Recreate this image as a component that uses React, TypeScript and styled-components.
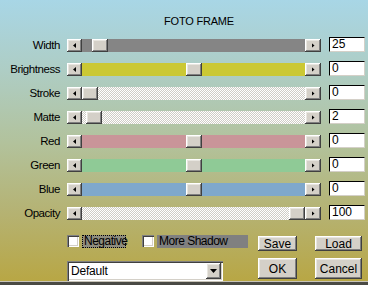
import React from "react";
import styled, { createGlobalStyle, css } from "styled-components";

const GlobalStyle = createGlobalStyle`
  html, body {
    margin: 0;
    padding: 0;
  }
  body {
    font-family: "Liberation Sans", Arial, sans-serif;
  }
`;

const raised = css`
  background: #d4d0c8;
  box-shadow: inset -1px -1px #404040, inset 1px 1px #ffffff,
    inset -2px -2px #808080, inset 2px 2px #e8e6e0;
`;

const sunken = css`
  box-shadow: inset 1px 1px #808080, inset 2px 2px #404040,
    inset -1px -1px #ffffff, inset -2px -2px #d4d0c8;
`;

const Panel = styled.div`
  width: 368px;
  height: 285px;
  box-sizing: border-box;
  padding-top: 14px;
  display: flex;
  flex-direction: column;
  font-size: 11.5px;
  letter-spacing: -0.45px;
  color: #000;
  background: linear-gradient(
    180deg,
    #a8d6e6 0%,
    #aecdc4 25%,
    #b2c29c 50%,
    #b5b272 75%,
    #b8a642 100%
  );
`;

const Title = styled.div`
  height: 14px;
  line-height: 14px;
  margin-bottom: 9px;
  padding-left: 30px;
  text-align: center;
  font-size: 11px;
  letter-spacing: -0.2px;
`;

const Rows = styled.div`
  display: flex;
  flex-direction: column;
`;

const Row = styled.div`
  display: grid;
  grid-template-columns: 67px 254px 36px;
  align-items: start;
  height: 24px;
`;

const Label = styled.div`
  margin-top: 2px;
  height: 13px;
  line-height: 13px;
  padding-right: 7px;
  text-align: right;
  white-space: nowrap;
`;

const Slider = styled.div`
  margin-top: 2px;
  height: 13px;
  display: flex;
`;

const ArrowButton = styled.div<{ $wide?: boolean }>`
  ${raised};
  width: ${(p) => (p.$wide ? 16 : 15)}px;
  height: 13px;
  flex: none;
  display: flex;
  align-items: center;
  justify-content: center;
`;

const Arrow = styled.span<{ $dir: "left" | "right" | "down" }>`
  display: block;
  background: #000;
  ${(p) =>
    p.$dir === "left"
      ? css`
          width: 3px;
          height: 5px;
          clip-path: polygon(100% 0, 0 50%, 100% 100%);
        `
      : p.$dir === "right"
      ? css`
          width: 3px;
          height: 5px;
          clip-path: polygon(0 0, 100% 50%, 0 100%);
        `
      : css`
          width: 7px;
          height: 4px;
          clip-path: polygon(0 0, 100% 0, 50% 100%);
        `}
`;

const fills: Record<string, string> = {
  gray: "#858585",
  yellow: "#cbc834",
  red: "#c99599",
  green: "#8fca96",
  blue: "#7fa8cc",
};

const Track = styled.div<{ $fill: string }>`
  flex: 1;
  position: relative;
  ${(p) =>
    p.$fill === "hatch"
      ? css`
          background: repeating-conic-gradient(#ffffff 0 25%, #cfcdc6 0 50%) 0 0 /
            2px 2px;
        `
      : css`
          background: ${fills[p.$fill]};
        `}
`;

const Thumb = styled.div`
  ${raised};
  position: absolute;
  top: 0;
  width: 16px;
  height: 13px;
`;

const ValueBox = styled.div`
  margin-left: 8px;
  width: 36px;
  height: 15px;
  box-sizing: border-box;
  background: #fff;
  border-top: 1px solid #000;
  border-left: 1px solid #000;
  border-right: 1px solid #d4d0c8;
  border-bottom: 1px solid #d4d0c8;
  padding-left: 2px;
  line-height: 13px;
  font-size: 12px;
  letter-spacing: 0;
`;

const Bottom = styled.div`
  display: grid;
  grid-template-columns: 258px 39px 65px;
  grid-template-rows: 15px 21px;
  row-gap: 7px;
  margin-top: 7px;
`;

const OptionsCell = styled.div`
  padding-left: 67px;
  display: flex;
  align-items: flex-start;
`;

const CheckGroup = styled.div<{ $gap?: number }>`
  display: flex;
  align-items: flex-start;
  margin-right: ${(p) => p.$gap ?? 0}px;
`;

const CheckBox = styled.div`
  width: 12px;
  height: 12px;
  margin-top: -1px;
  background: #fff;
  ${sunken};
  flex: none;
`;

const CheckLabel = styled.div<{ $focused?: boolean; $width: number }>`
  width: ${(p) => p.$width}px;
  height: 13px;
  line-height: 12px;
  margin-top: -1px;
  margin-left: 3px;
  padding: 0 2px;
  box-sizing: border-box;
  font-size: 12px;
  letter-spacing: -0.5px;
  background: ${(p) => (p.$focused ? "#8e8c7e" : "#808080")};
  ${(p) => p.$focused && `outline: 1px dotted #000; outline-offset: -1px;`}
  white-space: nowrap;
`;

const PushButton = styled.div<{ $col: number }>`
  ${raised};
  grid-column: ${(p) => p.$col};
  display: flex;
  align-items: center;
  justify-content: center;
  font-size: 12px;
  letter-spacing: 0;
  ${(p) => p.$col === 3 && `margin-left: 18px;`}
`;

const SelectCell = styled.div`
  padding-left: 67px;
  padding-top: 3px;
`;

const SelectBox = styled.div`
  width: 156px;
  height: 20px;
  box-sizing: border-box;
  background: #fff;
  ${sunken};
  display: flex;
  align-items: center;
  padding: 2px 2px 2px 4px;
`;

const SelectText = styled.div`
  flex: 1;
  font-size: 12px;
  letter-spacing: -0.2px;
`;

const DropButton = styled.div`
  ${raised};
  width: 15px;
  height: 16px;
  display: flex;
  align-items: center;
  justify-content: center;
`;

const Edge = styled.div`
  margin-top: auto;
  height: 3px;
  border-top: 1px solid #c8c4b8;
  background: #4a4a44;
`;

type SliderRow = {
  label: string;
  value: number;
  min: number;
  max: number;
  fill: string;
};

const rows: SliderRow[] = [
  { label: "Width", value: 25, min: 0, max: 500, fill: "gray" },
  { label: "Brightness", value: 0, min: -100, max: 100, fill: "yellow" },
  { label: "Stroke", value: 0, min: 0, max: 100, fill: "hatch" },
  { label: "Matte", value: 2, min: 0, max: 100, fill: "hatch" },
  { label: "Red", value: 0, min: -100, max: 100, fill: "red" },
  { label: "Green", value: 0, min: -100, max: 100, fill: "green" },
  { label: "Blue", value: 0, min: -100, max: 100, fill: "blue" },
  { label: "Opacity", value: 100, min: 0, max: 100, fill: "hatch" },
];

// thumb travel inside the track, in px
const TRAVEL = 207;

const SliderLine = ({ row }: { row: SliderRow }) => {
  const left = Math.round(((row.value - row.min) / (row.max - row.min)) * TRAVEL);
  return (
    <Row>
      <Label>{row.label}</Label>
      <Slider>
        <ArrowButton>
          <Arrow $dir="left" />
        </ArrowButton>
        <Track $fill={row.fill}>
          <Thumb style={{ left }} />
        </Track>
        <ArrowButton $wide>
          <Arrow $dir="right" />
        </ArrowButton>
      </Slider>
      <ValueBox>{row.value}</ValueBox>
    </Row>
  );
};

export default function App() {
  return (
    <>
      <GlobalStyle />
      <Panel>
        <Title>FOTO FRAME</Title>

        <Rows>
          {rows.map((row) => (
            <SliderLine key={row.label} row={row} />
          ))}
        </Rows>

        <Bottom>
          <OptionsCell>
            <CheckGroup $gap={16}>
              <CheckBox />
              <CheckLabel $focused $width={44}>
                Negative
              </CheckLabel>
            </CheckGroup>
            <CheckGroup>
              <CheckBox />
              <CheckLabel $width={91}>More Shadow</CheckLabel>
            </CheckGroup>
          </OptionsCell>
          <PushButton $col={2}>Save</PushButton>
          <PushButton $col={3}>Load</PushButton>

          <SelectCell>
            <SelectBox>
              <SelectText>Default</SelectText>
              <DropButton>
                <Arrow $dir="down" />
              </DropButton>
            </SelectBox>
          </SelectCell>
          <PushButton $col={2}>OK</PushButton>
          <PushButton $col={3}>Cancel</PushButton>
        </Bottom>

        <Edge />
      </Panel>
    </>
  );
}
